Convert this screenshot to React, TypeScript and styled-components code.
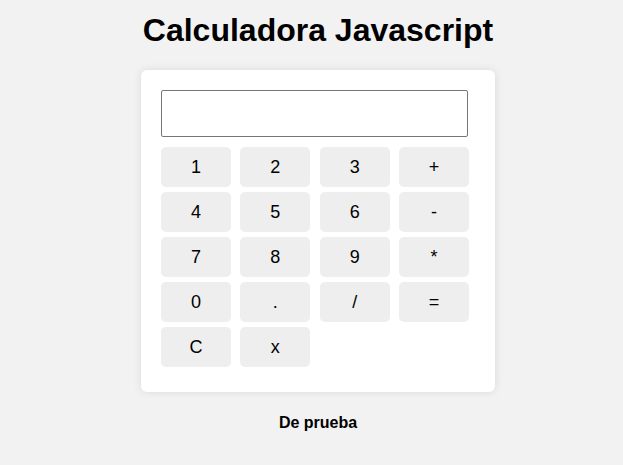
import React, { useState } from "react";
import styled, { createGlobalStyle } from "styled-components";

const Global = createGlobalStyle`
  html, body { margin: 0; padding: 0; background: #f2f2f2; }
  body { font-family: "Liberation Sans", Arial, sans-serif; color: #000; }
`;

const Page = styled.div`
  display: flex;
  flex-direction: column;
  align-items: center;
  padding-left: 13px;
`;

const Title = styled.h1`
  font-size: 32px;
  font-weight: bold;
  margin: 12px 0 21px;
  line-height: 37px;
`;

const Card = styled.div`
  box-sizing: border-box;
  width: 354px;
  background: #fff;
  border-radius: 6px;
  box-shadow: 0 0 8px rgba(0, 0, 0, 0.1);
  padding: 20px 20px 25px;
  display: flex;
  flex-direction: column;
  gap: 10px;
`;

const Display = styled.input`
  box-sizing: border-box;
  width: 307px;
  height: 47px;
  border: 1px solid #767676;
  border-radius: 2px;
  font-family: inherit;
  font-size: 20px;
  padding: 0 8px;
  outline: none;
`;

const Keys = styled.div`
  display: grid;
  grid-template-columns: repeat(4, 70px);
  column-gap: 9.33px;
  row-gap: 5px;
`;

const Key = styled.button`
  height: 40px;
  border: none;
  border-radius: 5px;
  background: #eeeeee;
  font-family: "Liberation Sans", Arial, sans-serif;
  font-size: 18px;
  color: #000;
  cursor: pointer;
  padding: 0;
`;

const Footer = styled.p`
  margin: 22px 0 0;
  font-size: 16px;
  font-weight: bold;
  line-height: 18px;
`;

const keys = ["1", "2", "3", "+", "4", "5", "6", "-", "7", "8", "9", "*", "0", ".", "/", "=", "C", "x"];

export default function App() {
  const [value, setValue] = useState("");
  const press = (k: string) => {
    if (k === "C") return setValue("");
    if (k === "x") return setValue((v) => v.slice(0, -1));
    if (k === "=") {
      try {
        // eslint-disable-next-line no-new-func
        setValue(String(Function(`return (${value})`)()));
      } catch {
        setValue("Error");
      }
      return;
    }
    setValue((v) => v + k);
  };
  return (
    <>
      <Global />
      <Page>
        <Title>Calculadora Javascript</Title>
        <Card>
          <Display value={value} readOnly />
          <Keys>
            {keys.map((k) => (
              <Key key={k} onClick={() => press(k)}>
                {k}
              </Key>
            ))}
          </Keys>
        </Card>
        <Footer>De prueba</Footer>
      </Page>
    </>
  );
}
